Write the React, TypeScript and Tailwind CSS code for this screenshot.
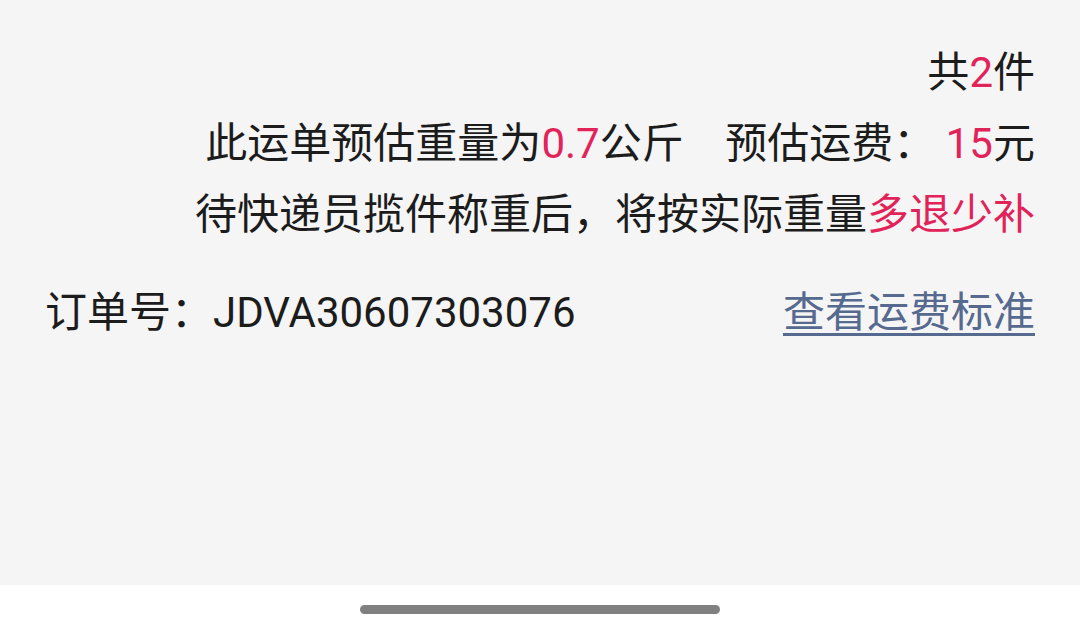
export default function App() {
  return (
    <div
      className="w-[1080px] h-[633px] flex flex-col bg-[#f5f5f5] text-[#1c1c1c]"
      style={{ fontFamily: 'Roboto, "Noto Sans CJK SC", sans-serif' }}
    >
      <div className="h-[585px] px-[45px] pt-[37px] text-[42px] leading-[71px]">
        <div className="text-right">
          共<span className="text-[#e2235a]">2</span>件
        </div>
        <div className="text-right whitespace-pre">
          此运单预估重量为<span className="text-[#e2235a]">0.7</span>公斤    预估运费： <span className="text-[#e2235a]">15</span>元
        </div>
        <div className="text-right">
          待快递员揽件称重后，将按实际重量<span className="text-[#e2235a]">多退少补</span>
        </div>
        <div className="mt-[27px] flex justify-between items-center">
          <span>订单号：JDVA30607303076</span>
          <span className="text-[#56698f] underline decoration-[3px] underline-offset-[6px]">查看运费标准</span>
        </div>
      </div>
      <div className="flex-1 bg-white flex items-center justify-center">
        <div className="w-[360px] h-[9px] rounded-full bg-[#808080]" />
      </div>
    </div>
  )
}
